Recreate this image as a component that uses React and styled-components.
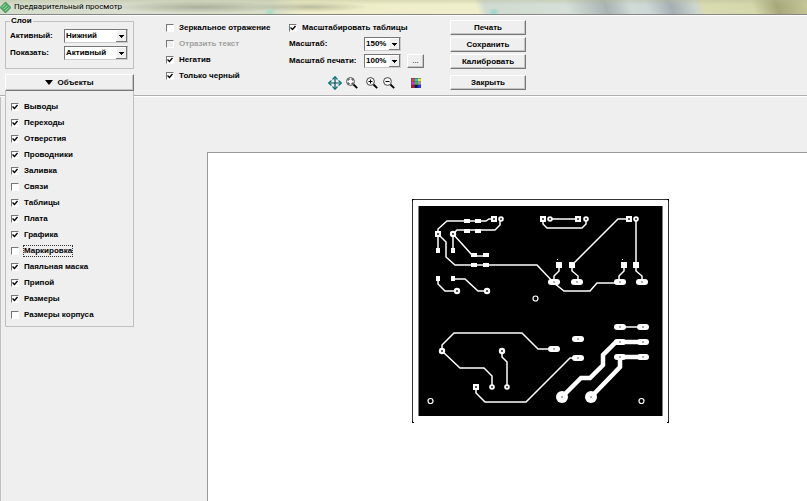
import { useState } from "react"
import styled, { createGlobalStyle, css } from "styled-components"

const GlobalStyle = createGlobalStyle`
    * { box-sizing: border-box; }
    body {
        margin: 0;
        background: #efefef;
        color: #000;
        font: bold 8px/12px "Liberation Sans", Arial, sans-serif;
    }
    button, select, input { font: inherit; color: inherit; }
`

const Window = styled.div`
    display: flex;
    flex-direction: column;
    min-height: 100vh;
    overflow: hidden;
`

const TitleBar = styled.header`
    display: flex;
    align-items: center;
    gap: 3px;
    height: 15px;
    border-bottom: 1px solid #858585;
    background:
        radial-gradient(6px 4px at 270px 12px, #9fdccb, transparent),
        radial-gradient(6px 4px at 494px 12px, #8fd8cc, transparent),
        radial-gradient(90px 6px at 200px 7px, #8d917999, transparent),
        radial-gradient(60px 5px at 310px 7px, #8d917988, transparent),
        linear-gradient(to bottom, #b5b89466, transparent 35%),
        linear-gradient(70deg, #d4dccb 0%, #d9decf 15%, #d6dcc5 34%, #eeedc8 37%, #f0efcb 59%, #d0dad0 60%, #d6e0d8 70%, #a9b3b3 75%, #d0dad6 78%, #cdd8d6 80%, #a5afb3 83%, #cdd6cf 86%, #d9dbb0 87%, #d5d8ab 93%, #a6a87a 96%, #c7c998 100%);
`

const Title = styled.h1`
    margin: 0;
    font: 8px/12px Roboto, sans-serif;
`

const Toolbar = styled.div`
    display: flex;
    height: 81px;
    padding: 4px 5px;
    border-top: 1px solid #fff;
    border-bottom: 1px solid #b0b0b0;
    box-shadow: 0 1px #fff;
`

const LayersColumn = styled.div`
    position: relative;
    width: 129px;
    margin-right: 32px;
`

const Group = styled.fieldset`
    display: grid;
    grid-template-columns: 54px 64px;
    row-gap: 3px;
    align-items: center;
    align-content: start;
    height: 54px;
    margin: 0;
    margin-top: -5px;
    padding: 2px 4px 0;
    border: 1px solid #c0c0c0;

    legend {
        padding: 0 1px;
    }
`

const selectArrow = `url("data:image/svg+xml,%3Csvg xmlns='http://www.w3.org/2000/svg' width='11' height='12' shape-rendering='crispEdges'%3E%3Cpath d='M0 0h11v12h-11z' fill='%23777'/%3E%3Cpath d='M0 0h10v11h-10z' fill='%23fff'/%3E%3Cpath d='M1 1h9v10h-9z' fill='%23efefef'/%3E%3Cpath d='M3 5h5v1h-1v1h-1v1h-1v-1h-1v-1h-1z'/%3E%3C/svg%3E")`

const Select = styled.select`
    appearance: none;
    width: ${({ $width }) => $width}px;
    height: 14px;
    padding: 0 12px 0 1px;
    border: 1px solid;
    border-color: #777 #ccc #ccc #777;
    border-radius: 0;
    outline: none;
    background: #fff ${selectArrow} right center no-repeat;
    line-height: 12px;
`

const Button = styled.button`
    display: flex;
    align-items: center;
    justify-content: center;
    gap: 4px;
    width: 100%;
    height: ${({ $height }) => $height || 15}px;
    padding: 0;
    border: 1px solid;
    border-color: #fff #777 #777 #fff;
    box-shadow: inset -1px -1px #c4c4c4;
    background: #efefef;
    font-weight: ${({ $light }) => ($light ? 400 : 700)};
`

const ObjectsMenu = styled.div`
    position: absolute;
    top: 71px;
    left: 0;
    z-index: 1;
    display: grid;
    gap: 4px;
    width: 100%;
    padding: 10px 5px 5px;
    border: 1px solid #c0c0c0;
    border-top: 0;
    background: #efefef;
`

const ObjectsButton = styled(Button)`
    margin-top: 5px;
`

const CheckRow = styled.label`
    display: flex;
    align-items: center;
    gap: 4px;
    height: 12px;
    white-space: nowrap;
    ${({ $disabled }) => $disabled && css`color: #a0a0a0;`}

    span {
        padding: 0 1px;
        ${({ $focused }) => $focused && css`outline: 1px dotted #333; outline-offset: -1px;`}
    }
`

const tick = `url("data:image/svg+xml,%3Csvg xmlns='http://www.w3.org/2000/svg' width='6' height='6'%3E%3Cpath d='M.5 2.500l2 2 3-3.500' fill='none' stroke='%23000' stroke-width='1.300'/%3E%3C/svg%3E")`

const Tick = styled.input`
    appearance: none;
    flex: none;
    width: 8px;
    height: 8px;
    margin: 0;
    border: 1px solid;
    border-color: #777 #fff #fff #777;
    background: #fff;

    &:checked { background: #fff ${tick} center no-repeat; }
    &:disabled { background: #efefef; }
`

const Options = styled.div`
    display: flex;
    flex-direction: column;
    gap: 4px;
    width: 123px;
    padding-top: 2px;
`

const ScaleColumn = styled.div`
    width: 161px;
    padding-top: 2px;
`

const ScaleRow = styled.div`
    display: grid;
    grid-template-columns: 75px 37px 17px;
    align-items: center;
    margin-top: 3px;
    height: 14px;
    white-space: nowrap;

    button { margin-left: 6px; }
`

const IconRow = styled.div`
    display: flex;
    align-items: center;
    gap: 3px;
    margin-top: 8px;
    padding-left: 39px;
`

const IconButton = styled.button`
    display: flex;
    width: 14px;
    height: 14px;
    margin-left: ${({ $gap }) => $gap || 0}px;
    padding: 0;
    border: 0;
    background: none;
`

const Actions = styled.div`
    display: flex;
    flex-direction: column;
    gap: 2px;
    width: 76px;

    button:last-child { margin-top: 4px; }
`

const Workspace = styled.main`
    display: flex;
    flex: 1;
    margin-top: 1px;
    padding: 55px 0 0 206px;
    border-left: 1px solid #c0c0c0;
`

const Sheet = styled.div`
    flex: 1;
    padding: 46px 0 0 204px;
    border-top: 1px solid #9a9a9a;
    border-left: 1px solid #9a9a9a;
    background: #fff;

    svg { display: block; }
`

const objects = [
    ["Выводы", true],
    ["Переходы", true],
    ["Отверстия", true],
    ["Проводники", true],
    ["Заливка", true],
    ["Связи", false],
    ["Таблицы", true],
    ["Плата", true],
    ["Графика", true],
    ["Маркировка", false, true],
    ["Паяльная маска", true],
    ["Припой", true],
    ["Размеры", true],
    ["Размеры корпуса", false],
]

const Check = ({ label, checked, focused, disabled }) => {
    const [on, setOn] = useState(checked)
    return (
        <CheckRow $focused={focused} $disabled={disabled}>
            <Tick type="checkbox" checked={on} disabled={disabled} onChange={() => setOn(!on)} />
            <span>{label}</span>
        </CheckRow>
    )
}

const Logo = () => (
    <svg width="11" height="13" viewBox="0 0 11 13">
        <path d="M5.500 1L11 6.500 5.500 12 0 6.500z" fill="#4aa862" stroke="#2b7a45" strokeWidth=".6" />
        <path d="M2 6.500l3.500-3.500M3.700 8.200l3.500-3.500M5.400 9.900l3.500-3.500" stroke="#c4ecca" strokeWidth=".8" />
    </svg>
)

const MoveIcon = () => (
    <svg width="14" height="14" viewBox="0 0 14 14">
        <path d="M7 1v12M1 7h12" stroke="#004c55" strokeWidth="1.200" />
        <path d="M4.500 3.500L7 .7l2.500 2.800M4.500 10.500L7 13.300l2.500-2.800M3.500 4.500L.7 7l2.800 2.500M10.500 4.500L13.300 7l-2.800 2.500" fill="none" stroke="#00747a" strokeWidth="1.200" />
    </svg>
)

const Magnifier = ({ children }) => (
    <svg width="14" height="14" viewBox="0 0 14 14">
        <circle cx="5.500" cy="5.500" r="3.900" fill="#f8f8f8" stroke="#444" />
        <path d="M8.500 8.500l3.700 3.700" stroke="#000" strokeWidth="1.800" />
        {children}
    </svg>
)

const PaletteIcon = () => (
    <svg width="14" height="14" viewBox="0 0 14 14">
        <path d="M2 2h10v10H2z" fill="#444" />
        <path d="M2.500 2.500h3v3h-3z" fill="#d44" />
        <path d="M5.700 2.500h3v3h-3z" fill="#3cc" />
        <path d="M8.900 2.500h3v3h-3z" fill="#ee4" />
        <path d="M2.500 5.700h3v3h-3z" fill="#d3d" />
        <path d="M5.700 5.700h3v3h-3z" fill="#4b5" />
        <path d="M8.900 5.700h3v3h-3z" fill="#a9a" />
        <path d="M2.500 8.900h3v3h-3z" fill="#a23" />
        <path d="M5.700 8.900h3v3h-3z" fill="#115" />
        <path d="M8.900 8.900h3v3h-3z" fill="#23d" />
    </svg>
)

// board coordinates start at the outline's top left corner
const thinTracks = [
    "M26 35v-5l9-8h19l12 0h8l3-2h5",
    "M41 35l4-4h9l12 0h17l5-5v-6",
    "M26 35v16M41 35v16M41 35l20 22h14",
    "M26 35l8 8v15l9 8h20l62 0 17 18 10 8h26l7-8h22",
    "M26 80v5l7 7h12M41 80h12l13 12h9",
    "M131 20v5l4 4h35l4-4v-5M138 20h28",
    "M217 20h-11l-46 46M224 20v46M147 66v6l-5 5v7M160 66v6l6 5v7M212 66v6l-5 5v7M224 66v6l6 5v7",
    "M30 152v-6l12-12h68l16 16h17M30 152l18 17h24l8 8v11",
    "M90 152v6l5 5v25M64 188v6l9 9h41l44-44h8",
    "M208 128h23",
]

const squarePads = [[82, 20], [26, 35], [131, 20], [166, 20], [217, 20], [64, 188]]
const smallRound = [[89, 20], [138, 20], [174, 20], [224, 20], [80, 188], [95, 188]]
const roundPads = [[41, 35], [45, 92], [75, 92], [30, 152], [90, 152]]
const ovals = [[142, 83], [165, 83], [208, 83], [230, 83], [142, 150], [166, 140], [166, 159], [208, 128], [231, 128], [208, 143], [231, 143], [208, 158], [231, 158]]
const smallChips = [[55, 22], [66, 22], [55, 32], [66, 32], [62, 56], [74, 56], [62, 66], [74, 66]]
const upright = [[26, 51], [41, 51], [26, 79], [41, 79]]
const bigChips = [[147, 66], [160, 66], [212, 66], [224, 66]]

const Board = () => (
    <svg width="257" height="224" viewBox="0 0 257 224">
        <path d="M.5 224V.5h256V224" fill="none" stroke="#333" />
        <path d="M0 2V0h2M255 0h2v2M0 222v2h2M255 224h2v-2" stroke="#000" fill="none" strokeWidth="2" />
        <path d="M6.500 7h244v210h-244z" />
        <g fill="none" stroke="#fff" strokeWidth="1.500">
            {thinTracks.map((d) => <path key={d} d={d} />)}
        </g>
        <path d="M150 198l19-19h9l13-13v-10l13-13h27M179 198l29-30v-10h23" fill="none" stroke="#fff" strokeWidth="4.500" />
        <g fill="#fff">
            {smallChips.map(([x, y]) => <rect key={`${x},${y}`} x={x - 3} y={y - 2} width="6" height="4" />)}
            {upright.map(([x, y]) => <rect key={`${x},${y}`} x={x - 2} y={y - 2} width="4" height="5" />)}
            {bigChips.map(([x, y]) => <rect key={`${x},${y}`} x={x - 3} y={y - 3} width="6" height="6" />)}
            {ovals.map(([x, y]) => <rect key={`${x},${y}`} x={x - 6} y={y - 3} width="12" height="6" rx="3" />)}
            {squarePads.map(([x, y]) => <rect key={`${x},${y}`} x={x - 3} y={y - 3} width="6" height="6" />)}
            {smallRound.map(([x, y]) => <circle key={`${x},${y}`} cx={x} cy={y} r="2.800" />)}
            {roundPads.map(([x, y]) => <circle key={`${x},${y}`} cx={x} cy={y} r="3.200" />)}
            <circle cx="150" cy="198" r="6" />
            <circle cx="179" cy="198" r="6" />
            <path d="M145 60h1v1h-1zM210 60h1v1h-1z" />
        </g>
        <g fill="#222">
            {[...squarePads, ...smallRound, ...roundPads].map(([x, y]) => <circle key={`${x},${y}`} cx={x} cy={y} r="1" />)}
            {[...ovals, [150, 198], [179, 198]].map(([x, y]) => <circle key={`${x},${y}`} cx={x} cy={y} r=".7" />)}
        </g>
        <g fill="none" stroke="#fff" strokeWidth="1.200">
            <circle cx="123.500" cy="99.500" r="2.500" />
            <circle cx="18.500" cy="202" r="2.500" />
            <circle cx="229.500" cy="202" r="2.500" />
        </g>
    </svg>
)

const App = () => (
    <>
        <GlobalStyle />
        <Window>
            <TitleBar>
                <Logo />
                <Title>Предварительный просмотр</Title>
            </TitleBar>
            <Toolbar>
                <LayersColumn>
                    <Group>
                        <legend>Слои</legend>
                        <label htmlFor="active">Активный:</label>
                        <Select id="active" $width={64}><option>Нижний</option></Select>
                        <label htmlFor="show">Показать:</label>
                        <Select id="show" $width={64}><option>Активный</option></Select>
                    </Group>
                    <ObjectsButton $height={17}>
                        <svg width="8" height="5"><path d="M0 0h8L4 5z" /></svg>
                        Объекты
                    </ObjectsButton>
                    <ObjectsMenu>
                        {objects.map(([label, checked, focused]) => (
                            <Check key={label} label={label} checked={checked} focused={focused} />
                        ))}
                    </ObjectsMenu>
                </LayersColumn>
                <Options>
                    <Check label="Зеркальное отражение" checked={false} />
                    <Check label="Отразить текст" checked={false} disabled />
                    <Check label="Негатив" checked />
                    <Check label="Только черный" checked />
                </Options>
                <ScaleColumn>
                    <Check label="Масштабировать таблицы" checked />
                    <ScaleRow>
                        <label htmlFor="scale">Масштаб:</label>
                        <Select id="scale" $width={37}><option>150%</option></Select>
                    </ScaleRow>
                    <ScaleRow>
                        <label htmlFor="print-scale">Масштаб печати:</label>
                        <Select id="print-scale" $width={37}><option>100%</option></Select>
                        <Button $height={14} $light>...</Button>
                    </ScaleRow>
                    <IconRow>
                        <IconButton aria-label="Сдвиг"><MoveIcon /></IconButton>
                        <IconButton aria-label="Область"><Magnifier><path d="M3.500 4.500v-1h1M6.500 3.500h1v1M7.500 6.500v1h-1M4.500 7.500h-1v-1" fill="none" stroke="#333" /></Magnifier></IconButton>
                        <IconButton aria-label="Увеличить" $gap={3}><Magnifier><path d="M3.500 5.500h4M5.500 3.500v4" stroke="#000" /></Magnifier></IconButton>
                        <IconButton aria-label="Уменьшить"><Magnifier><path d="M3.500 5.500h4" stroke="#000" /></Magnifier></IconButton>
                        <IconButton aria-label="Цвета" $gap={10}><PaletteIcon /></IconButton>
                    </IconRow>
                </ScaleColumn>
                <Actions>
                    <Button>Печать</Button>
                    <Button>Сохранить</Button>
                    <Button>Калибровать</Button>
                    <Button>Закрыть</Button>
                </Actions>
            </Toolbar>
            <Workspace>
                <Sheet><Board /></Sheet>
            </Workspace>
        </Window>
    </>
)

export default App
